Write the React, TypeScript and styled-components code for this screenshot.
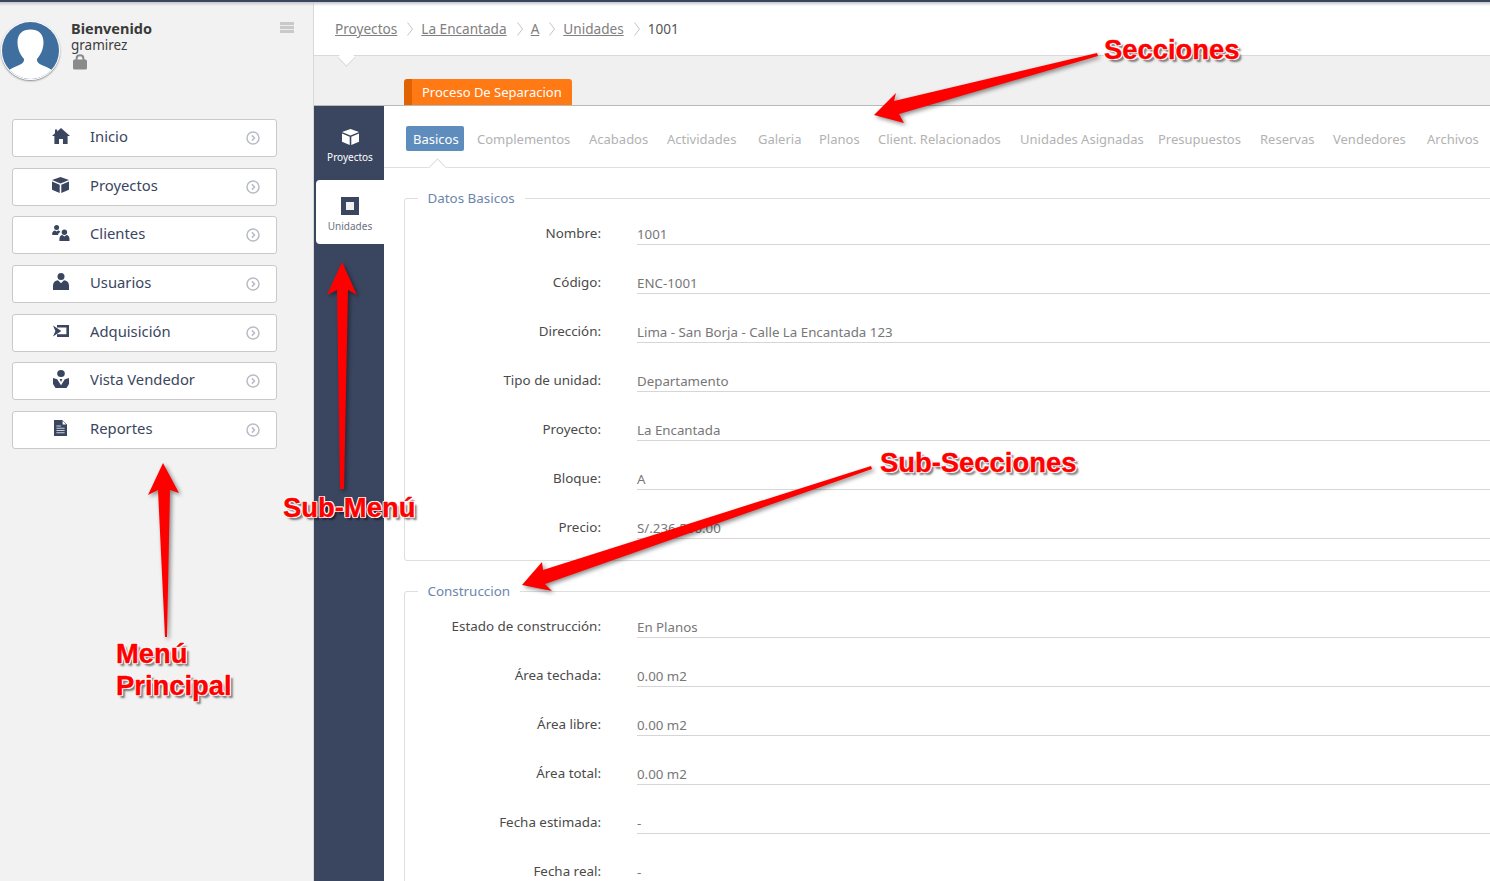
import React from 'react';
import styled, { createGlobalStyle } from 'styled-components';

const GlobalStyle = createGlobalStyle`
    html, body {
        margin: 0;
        padding: 0;
        height: 100%;
        overflow: hidden;
        background: #fff;
    }
    body {
        font-family: "Noto Sans", "Open Sans", sans-serif;
    }
`;

const DARK = '#3a4660';

const HomeIcon = () => (
    <svg width="18" height="16" viewBox="0 0 18 16"><path fill={DARK} d="M9 0 18 8 15.6 8V16H11V11H7V16H2.4V8H0L3 5.3V1.5H5.2V3.4Z" /></svg>
);
const CubeIcon = ({ color = DARK }: { color?: string }) => (
    <svg width="17" height="16" viewBox="0 0 17 16"><path fill={color} d="M8.5 0 17 3 8.5 6.4 0 3ZM0 4.6 7.7 7.8V16L0 12.8ZM17 4.6V12.8L9.3 16V7.8Z" /></svg>
);
const ClientsIcon = () => (
    <svg width="18" height="16" viewBox="0 0 18 16">
        <circle cx="4.6" cy="2.6" r="2.5" fill={DARK} />
        <path fill={DARK} d="M0 9.5C0 6.5 1.8 5.4 3 5.4L4.6 6.6 6.2 5.4C7 5.4 8 6 8.5 7 7 7.6 6.2 8.6 6 9.9H1Z" />
        <circle cx="12.4" cy="7.2" r="2.7" fill={DARK} />
        <path fill={DARK} d="M7.4 16V14C7.4 11.6 8.7 10.2 10.2 10L12.4 11.6 14.6 10C16.2 10.2 17.5 11.6 17.5 14V16Z" />
    </svg>
);
const UserIcon = () => (
    <svg width="16" height="17" viewBox="0 0 16 17">
        <circle cx="8" cy="3.5" r="3.5" fill={DARK} />
        <path fill={DARK} d="M0 17V12.5C0 9.5 2.2 7.6 5 7.3L8 10.2 11 7.3C13.8 7.6 16 9.5 16 12.5V17Z" />
    </svg>
);
const AcquisitionIcon = () => (
    <svg width="16" height="12" viewBox="0 0 16 12">
        <path fill={DARK} d="M4 0H16V12H4V9.2H13.4V2.4H4Z" />
        <path fill={DARK} d="M0 .4 8.4 6 0 11.6 2.4 6Z" />
    </svg>
);
const SellerIcon = () => (
    <svg width="16" height="18" viewBox="0 0 16 18">
        <ellipse cx="8" cy="3.6" rx="3.8" ry="3.5" fill={DARK} />
        <path fill={DARK} d="M0 8 4.2 9.2 8 15.2 11.8 9.2 16 8V14L13.5 18H2.5L0 14Z" />
        <path fill={DARK} d="M6.6 9H9.4L8 12Z" />
    </svg>
);
const ReportIcon = () => (
    <svg width="13" height="16" viewBox="0 0 13 16">
        <path fill={DARK} d="M0 0H8.2L13 4.6V16H0Z" />
        <path fill="#fff" d="M8.6 .8 12.2 4.4H8.6Z" />
        <path fill="#cdd1d9" d="M2.4 5.6H7V6.6H2.4ZM2.4 7.8H10.6V8.8H2.4ZM2.4 10H10.6V11H2.4ZM2.4 12.2H10.6V13.2H2.4Z" />
    </svg>
);
const ChevronCircle = () => (
    <svg width="14" height="14" viewBox="0 0 14 14" fill="none" stroke="#b9bcc4" strokeWidth="1.5">
        <circle cx="7" cy="7" r="6" />
        <path d="M5.9 4.4 8.5 7 5.9 9.6" />
    </svg>
);
const LockIcon = () => (
    <svg width="14" height="16" viewBox="0 0 14 16">
        <path fill="none" stroke="#8a8a8a" strokeWidth="2" d="M3.6 7V4.6C3.6 2.6 5 1.2 7 1.2S10.4 2.6 10.4 4.6V7" />
        <rect y="5.6" width="14" height="10" rx="1.6" fill="#8a8a8a" />
    </svg>
);

// annotation arrows, one svg over the whole picture
const ArrowsLayer = styled.svg`
    position: absolute;
    left: 0;
    top: 0;
    width: 1490px;
    height: 881px;
    pointer-events: none;
    filter: drop-shadow(2px 2px 2px rgba(0, 0, 0, 0.45));
`;

const Callout = styled.div<{ $left: number; $top: number }>`
    position: absolute;
    left: ${(p) => p.$left}px;
    top: ${(p) => p.$top}px;
    font-family: "Liberation Sans", Arial, sans-serif;
    font-weight: 700;
    font-size: 27.4px;
    line-height: 32px;
    color: #ff0000;
    -webkit-text-stroke: 0.4px #ff0000;
    white-space: nowrap;
    text-shadow:
        -1px -1px 0 #fff, 1px -1px 0 #fff, -1px 1px 0 #fff, 1px 1px 0 #fff,
        0 -1px 0 #fff, 0 1px 0 #fff, -1px 0 0 #fff, 1px 0 0 #fff,
        3px 3px 2px rgba(0, 0, 0, 0.5);
`;

const Page = styled.div`
    position: relative;
    width: 1490px;
    height: 881px;
    overflow: hidden;
    display: flex;
    border-top: 2px solid #3a4660;
    box-sizing: border-box;
    &::after {
        content: "";
        position: absolute;
        left: 0;
        right: 0;
        top: 0;
        height: 4px;
        background: linear-gradient(#c4c6c9, rgba(230, 230, 230, 0));
    }
`;

const Sidebar = styled.aside`
    width: 313px;
    flex: none;
    background: #f2f2f2;
    border-right: 1px solid #d8d8d8;
    box-sizing: content-box;
`;

const Profile = styled.div`
    position: relative;
    display: flex;
    height: 117px;
    box-sizing: border-box;
    padding: 19px 0 0 1px;
`;

const Avatar = styled.div`
    width: 57px;
    height: 57px;
    border-radius: 50%;
    border: 1px solid #fff;
    box-shadow: 0 1px 2px rgba(0, 0, 0, 0.45);
    overflow: hidden;
    flex: none;
`;

const ProfileText = styled.div`
    margin-left: 11px;
    font-size: 13.5px;
    line-height: 16px;
    color: #3d3d3d;
`;

const Welcome = styled.div`
    font-weight: 700;
    font-size: 14.5px;
    line-height: 14px;
    margin-bottom: 2px;
    color: #3a3a3a;
`;

const LockSlot = styled.div`
    height: 16px;
    margin-top: 1px;
    margin-left: 2px;
`;

const Burger = styled.div`
    position: absolute;
    left: 280px;
    top: 20px;
    width: 14px;
    height: 11px;
    background: repeating-linear-gradient(#c9c9c9 0 3px, #ececec 3px 4px);
`;

const MenuList = styled.nav`
    display: flex;
    flex-direction: column;
    gap: 10.67px;
    margin: 0 36px 0 12px;
`;

const MenuItem = styled.a`
    height: 38px;
    box-sizing: border-box;
    display: flex;
    align-items: center;
    background: #fff;
    border: 1px solid #c9c9c9;
    border-radius: 3px;
    color: ${DARK};
    font-size: 14.8px;
`;

const MenuIconSlot = styled.span`
    width: 77px;
    padding: 0 0 4px 18px;
    flex: none;
    box-sizing: border-box;
    display: flex;
    justify-content: center;
`;

const MenuLabel = styled.span`
    flex: 1;
    padding-bottom: 4px;
`;

const MenuArrow = styled.span`
    display: flex;
    margin-right: 16px;
`;

const Main = styled.main`
    flex: 1;
    min-width: 0;
    display: flex;
    flex-direction: column;
`;

const Breadcrumb = styled.div`
    position: relative;
    height: 54px;
    flex: none;
    box-sizing: border-box;
    border-bottom: 1px solid #d9d9d9;
    padding: 17px 0 0 21px;
    display: flex;
    align-items: flex-start;
    font-size: 13.6px;
    line-height: 20px;
    background: #fff;
    &::after {
        content: "";
        position: absolute;
        left: 26px;
        bottom: -9px;
        width: 12px;
        height: 12px;
        background: #fff;
        border-right: 1px solid #d9d9d9;
        border-bottom: 1px solid #d9d9d9;
        transform: rotate(45deg) scale(1, 1);
    }
`;

const Crumb = styled.a`
    color: #808080;
    text-decoration: underline;
`;

const CrumbCurrent = styled.span`
    color: #555;
`;

const CrumbSep = styled.span`
    display: flex;
    align-items: center;
    height: 20px;
    padding: 0 8px 0 10px;
`;

const ProcessBand = styled.div`
    height: 50px;
    flex: none;
    background: #f0f0f0;
    border-bottom: 1px solid #b9b9b9;
    box-sizing: border-box;
    display: flex;
    align-items: flex-end;
    padding-left: 90px;
`;

const ProcessTab = styled.div`
    height: 26px;
    width: 168px;
    box-sizing: border-box;
    background: #ff7a14;
    border-left: 8px solid #e06200;
    border-radius: 3px 3px 0 0;
    color: #fff;
    font-size: 13px;
    line-height: 27px;
    padding-left: 10px;
    white-space: nowrap;
`;

const Body = styled.div`
    flex: 1;
    display: flex;
    min-height: 0;
`;

const SubMenu = styled.div`
    width: 70px;
    flex: none;
    background: ${DARK};
`;

const SubMenuItem = styled.div<{ $active?: boolean }>`
    height: ${(p) => (p.$active ? 64 : 74)}px;
    margin-left: ${(p) => (p.$active ? 2 : 0)}px;
    box-sizing: border-box;
    padding-top: ${(p) => (p.$active ? 17 : 23)}px;
    padding-left: ${(p) => (p.$active ? 0 : 2)}px;
    display: flex;
    flex-direction: column;
    align-items: center;
    background: ${(p) => (p.$active ? '#fff' : 'transparent')};
    border-radius: ${(p) => (p.$active ? '4px 0 0 4px' : '0')};
    color: ${(p) => (p.$active ? '#6a7280' : '#fff')};
    font-size: 10px;
    line-height: 12px;
    gap: ${(p) => (p.$active ? 5 : 6)}px;
`;

const StopBox = styled.span`
    width: 18px;
    height: 18px;
    background: ${DARK};
    display: flex;
    align-items: center;
    justify-content: center;
    &::after {
        content: "";
        width: 8px;
        height: 8px;
        background: #f1f1f1;
    }
`;

const Content = styled.div`
    flex: 1;
    min-width: 0;
    background: #fff;
`;

const TabBar = styled.div`
    position: relative;
    height: 62px;
    box-sizing: border-box;
    border-bottom: 1px solid #dedede;
    padding: 20px 0 0 22px;
    display: flex;
    font-size: 13px;
    white-space: nowrap;
    &::after {
        content: "";
        position: absolute;
        left: 47px;
        bottom: -7px;
        width: 12px;
        height: 12px;
        background: #fff;
        border-left: 1px solid #dedede;
        border-top: 1px solid #dedede;
        transform: rotate(45deg);
    }
`;

const Tab = styled.a<{ $active?: boolean; $width: number }>`
    width: ${(p) => p.$width}px;
    flex: none;
    height: 25px;
    line-height: 27px;
    box-sizing: border-box;
    color: ${(p) => (p.$active ? '#fff' : '#b2b2b2')};
    background: ${(p) => (p.$active ? '#5d8cbd' : 'transparent')};
    border-radius: 2px;
    padding-left: 7px;
    margin-right: ${(p) => (p.$active ? 6 : 0)}px;
`;

const FieldGroup = styled.fieldset`
    margin: 21px -30px 0 20px;
    padding: 0;
    border: 1px solid #dedede;
    border-radius: 3px;
    min-width: 0;
`;

const GroupTitle = styled.legend`
    margin-left: 12.5px;
    padding: 0 10px;
    color: #6b86ad;
    font-size: 13.4px;
    line-height: 18px;
`;

const FieldRows = styled.div`
    display: flex;
    flex-direction: column;
    gap: 22px;
    padding: 11px 0 21px;
`;

const FieldRow = styled.div`
    display: flex;
    height: 27px;
    font-size: 13.3px;
`;

const FieldLabel = styled.label`
    width: 196px;
    flex: none;
    text-align: right;
    color: #4a4a4a;
    font-size: 13.4px;
    line-height: 30px;
`;

const FieldValue = styled.div`
    flex: 1;
    margin-left: 36px;
    padding-top: 3px;
    border-bottom: 1px solid #d6d6d6;
    color: #777;
    line-height: 26px;
    box-sizing: border-box;
`;

const menu = [
    { label: 'Inicio', icon: <HomeIcon /> },
    { label: 'Proyectos', icon: <CubeIcon /> },
    { label: 'Clientes', icon: <ClientsIcon /> },
    { label: 'Usuarios', icon: <UserIcon /> },
    { label: 'Adquisición', icon: <AcquisitionIcon /> },
    { label: 'Vista Vendedor', icon: <SellerIcon /> },
    { label: 'Reportes', icon: <ReportIcon /> },
];

const tabs: [string, number][] = [
    ['Basicos', 58],
    ['Complementos', 112],
    ['Acabados', 78],
    ['Actividades', 91],
    ['Galeria', 61],
    ['Planos', 59],
    ['Client. Relacionados', 142],
    ['Unidades Asignadas', 138],
    ['Presupuestos', 102],
    ['Reservas', 73],
    ['Vendedores', 94],
    ['Archivos', 70],
];

const basics = [
    ['Nombre:', '1001'],
    ['Código:', 'ENC-1001'],
    ['Dirección:', 'Lima - San Borja - Calle La Encantada 123'],
    ['Tipo de unidad:', 'Departamento'],
    ['Proyecto:', 'La Encantada'],
    ['Bloque:', 'A'],
    ['Precio:', 'S/.236,500.00'],
];

const construction = [
    ['Estado de construcción:', 'En Planos'],
    ['Área techada:', '0.00 m2'],
    ['Área libre:', '0.00 m2'],
    ['Área total:', '0.00 m2'],
    ['Fecha estimada:', '-'],
    ['Fecha real:', '-'],
];

const Sep = () => (
    <CrumbSep>
        <svg width="6" height="14" viewBox="0 0 6 14" fill="none" stroke="#c4c4c4"><path d="M.5 .5 5.5 7 .5 13.5" /></svg>
    </CrumbSep>
);

const Fields = ({ rows }: { rows: string[][] }) => (
    <FieldRows>
        {rows.map(([label, value]) => (
            <FieldRow key={label}>
                <FieldLabel>{label}</FieldLabel>
                <FieldValue>{value}</FieldValue>
            </FieldRow>
        ))}
    </FieldRows>
);

export default function App() {
    return (
        <>
            <GlobalStyle />
            <Page>
                <Sidebar>
                    <Profile>
                        <Avatar>
                            <svg width="57" height="57" viewBox="0 0 57 57">
                                <rect width="57" height="57" fill="#3f6f9f" />
                                <path fill="#fff" d="M28.5 7.5C20.5 7.5 15.5 12 15.5 20 15.5 26 17.5 32 22 37 22.5 40 20 42 15 44 10 46 6.5 48 5 50 10 55 19 57 28.5 57 38 57 47 55 52 50 50.5 48 47 46 42 44 37 42 34.5 40 35 37 39.5 32 41.5 26 41.5 20 41.5 12 36.5 7.5 28.5 7.5Z" />
                            </svg>
                        </Avatar>
                        <ProfileText>
                            <Welcome>Bienvenido</Welcome>
                            <div>gramirez</div>
                            <LockSlot><LockIcon /></LockSlot>
                        </ProfileText>
                        <Burger />
                    </Profile>
                    <MenuList>
                        {menu.map((item) => (
                            <MenuItem key={item.label}>
                                <MenuIconSlot>{item.icon}</MenuIconSlot>
                                <MenuLabel>{item.label}</MenuLabel>
                                <MenuArrow><ChevronCircle /></MenuArrow>
                            </MenuItem>
                        ))}
                    </MenuList>
                </Sidebar>
                <Main>
                    <Breadcrumb>
                        <Crumb>Proyectos</Crumb><Sep />
                        <Crumb>La Encantada</Crumb><Sep />
                        <Crumb>A</Crumb><Sep />
                        <Crumb>Unidades</Crumb><Sep />
                        <CrumbCurrent>1001</CrumbCurrent>
                    </Breadcrumb>
                    <ProcessBand>
                        <ProcessTab>Proceso De Separacion</ProcessTab>
                    </ProcessBand>
                    <Body>
                        <SubMenu>
                            <SubMenuItem><CubeIcon color="#fff" />Proyectos</SubMenuItem>
                            <SubMenuItem $active><StopBox />Unidades</SubMenuItem>
                        </SubMenu>
                        <Content>
                            <TabBar>
                                {tabs.map(([name, width], i) => (
                                    <Tab key={name} $width={width} $active={i === 0}>{name}</Tab>
                                ))}
                            </TabBar>
                            <FieldGroup>
                                <GroupTitle>Datos Basicos</GroupTitle>
                                <Fields rows={basics} />
                            </FieldGroup>
                            <FieldGroup>
                                <GroupTitle>Construccion</GroupTitle>
                                <Fields rows={construction} />
                            </FieldGroup>
                        </Content>
                    </Body>
                </Main>
                <ArrowsLayer viewBox="0 0 1490 881">
                    <path fill="#ff0000" d="M1097 51 894 99 896 91 874 113 904 121 899 112 1098 54Z" />
                    <path fill="#ff0000" d="M342 260 327 293 337 288 340 487 344 487 348 288 357 293Z" />
                    <path fill="#ff0000" d="M163 461 148 493 158 488 165 635 167 635 170 488 179 491Z" />
                    <path fill="#ff0000" d="M871 464 543 568 542 560 522 583 552 589 545 582 872 467Z" />
                </ArrowsLayer>
                <Callout $left={1104} $top={32}>Secciones</Callout>
                <Callout $left={880} $top={445}>Sub-Secciones</Callout>
                <Callout $left={283} $top={490}>Sub-Menú</Callout>
                <Callout $left={116} $top={636}>Menú</Callout>
                <Callout $left={116} $top={668}>Principal</Callout>
            </Page>
        </>
    );
}
